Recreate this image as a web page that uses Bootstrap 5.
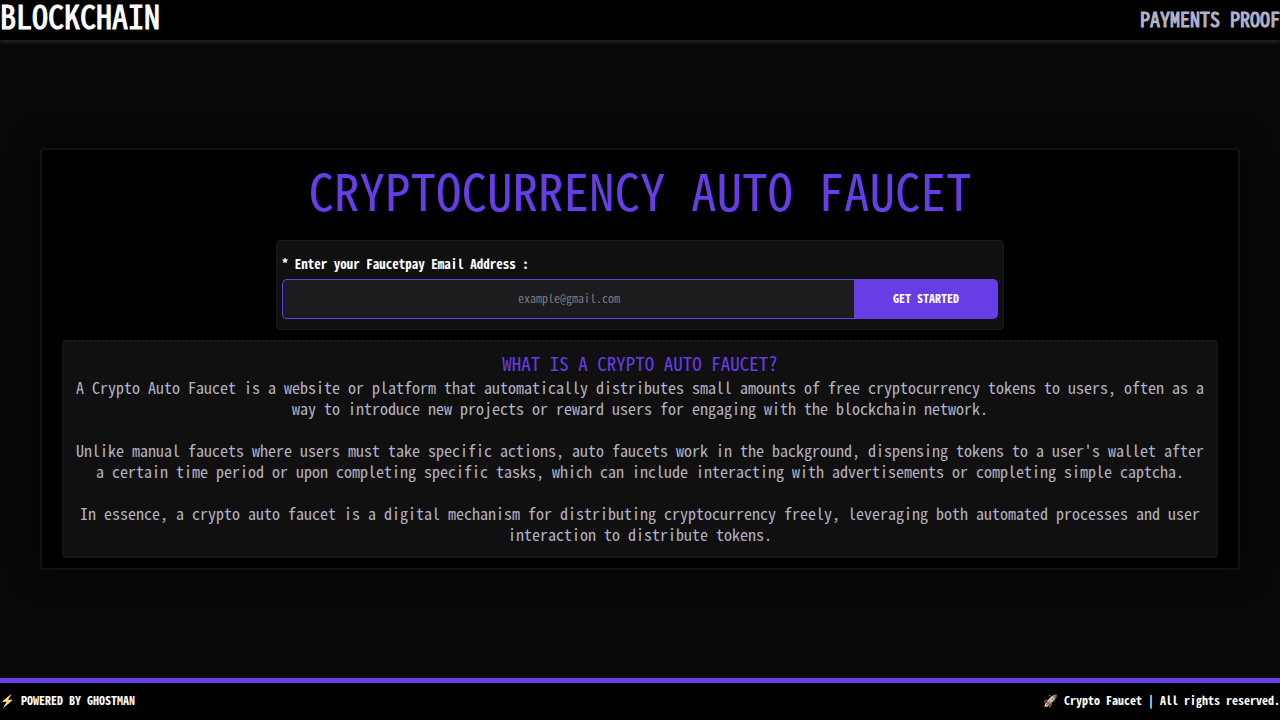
<!DOCTYPE html>
<html lang="en" data-bs-theme="dark">
<head>
<meta charset="utf-8">
<meta name="viewport" content="width=device-width, initial-scale=1">
<title>Cryptocurrency Auto Faucet</title>
<link href="https://cdn.jsdelivr.net/npm/bootstrap@5.3.0/dist/css/bootstrap.min.css" rel="stylesheet">
<style>
  :root { --accent: #673de6; --soft: #b3b3c6; --panel: #101010; }
  body { background: #080808; color: #fff; font-family: "Noto Sans Mono CJK JP", "Noto Sans CJK JP", monospace; font-size: 16px; line-height: 21px; }
  .topbar { background: #000; min-height: 40px; box-shadow: 0 2px 4px #2a2a2a; }
  .brand { font-size: 32px; line-height: 30px; -webkit-text-stroke: 1px currentColor; }
  .toplink { font-size: 20px; line-height: 38px; -webkit-text-stroke: 1px currentColor; color: var(--soft); }
  .panel-outer { background: #000; border: 2px solid #111; border-radius: 4px; padding: 6px 20px 10px; margin: 0 40px; box-shadow: 0 0 30px #040404; }
  .headline { color: var(--accent); font-size: 51px; line-height: 66px; font-weight: 400; margin: 0 0 18px; }
  .signup { width: 63%; background: var(--panel); border: 1px solid #1a1a1a; border-radius: 4px; padding: 14px 5px 10px; }
  .signup label { font-size: 13px; line-height: 18px; font-weight: 700; margin-bottom: 6px; }
  .signup .input-group { height: 40px; }
  .signup .form-control, .signup .form-control:focus { background: #1c1c1e; border: 1px solid var(--accent); border-right: 0; border-radius: 5px 0 0 5px; padding: 5px 12px 7px; font-size: 12px; text-align: center; box-shadow: none; }
  .signup .form-control::placeholder { color: #7c757c; }
  .signup .btn { width: 20%; min-width: 144px; background: var(--accent); color: #fff; border: 0; border-radius: 0 5px 5px 0; padding: 5px 12px 7px; font-size: 12px; line-height: 20px; font-weight: 700; }
  .about { background: var(--panel); border: 2px dotted #1a1a1a; border-radius: 4px; padding: 6px 10px 11px; margin-top: 10px; color: var(--soft); }
  .about h2 { color: var(--accent); font-size: 19px; line-height: 29px; font-weight: 400; margin: 0; }
  .about p { margin: 0 0 21px; }
  .about p:last-child { margin: 0; }
  .foot { background: #000; border-top: 5px solid var(--accent); padding-bottom: 3px; min-height: 42px; font-size: 12px; font-weight: 700; }
  .emoji { font-family: "Noto Color Emoji", sans-serif; filter: sepia(.6); }
</style>
</head>
<body class="d-flex flex-column min-vh-100">
<header>
  <nav class="topbar d-flex justify-content-between align-items-start">
    <a class="brand text-white text-decoration-none" href="#">BLOCKCHAIN</a>
    <a class="toplink text-decoration-none" href="#">PAYMENTS PROOF</a>
  </nav>
</header>
<main class="flex-grow-1 d-flex flex-column justify-content-center">
  <section class="panel-outer text-center">
    <h1 class="headline">CRYPTOCURRENCY AUTO FAUCET</h1>
    <form class="signup mx-auto text-start">
      <label class="d-block" for="email">* Enter your Faucetpay Email Address :</label>
      <div class="input-group">
        <input class="form-control" type="email" id="email" placeholder="example@gmail.com">
        <button class="btn" type="submit">GET STARTED</button>
      </div>
    </form>
    <article class="about">
      <h2>WHAT IS A CRYPTO AUTO FAUCET?</h2>
      <p>A Crypto Auto Faucet is a website or platform that automatically distributes small amounts of free cryptocurrency tokens to users, often as a way to introduce new projects or reward users for engaging with the blockchain network.</p>
      <p>Unlike manual faucets where users must take specific actions, auto faucets work in the background, dispensing tokens to a user's wallet after a certain time period or upon completing specific tasks, which can include interacting with advertisements or completing simple captcha.</p>
      <p>In essence, a crypto auto faucet is a digital mechanism for distributing cryptocurrency freely, leveraging both automated processes and user interaction to distribute tokens.</p>
    </article>
  </section>
</main>
<footer class="foot d-flex justify-content-between align-items-center">
  <span><span class="emoji">⚡</span> POWERED BY GHOSTMAN</span>
  <span><span class="emoji">🚀</span> Crypto Faucet | All rights reserved.</span>
</footer>
<script src="https://cdn.jsdelivr.net/npm/bootstrap@5.3.0/dist/js/bootstrap.bundle.min.js"></script>
</body>
</html>
